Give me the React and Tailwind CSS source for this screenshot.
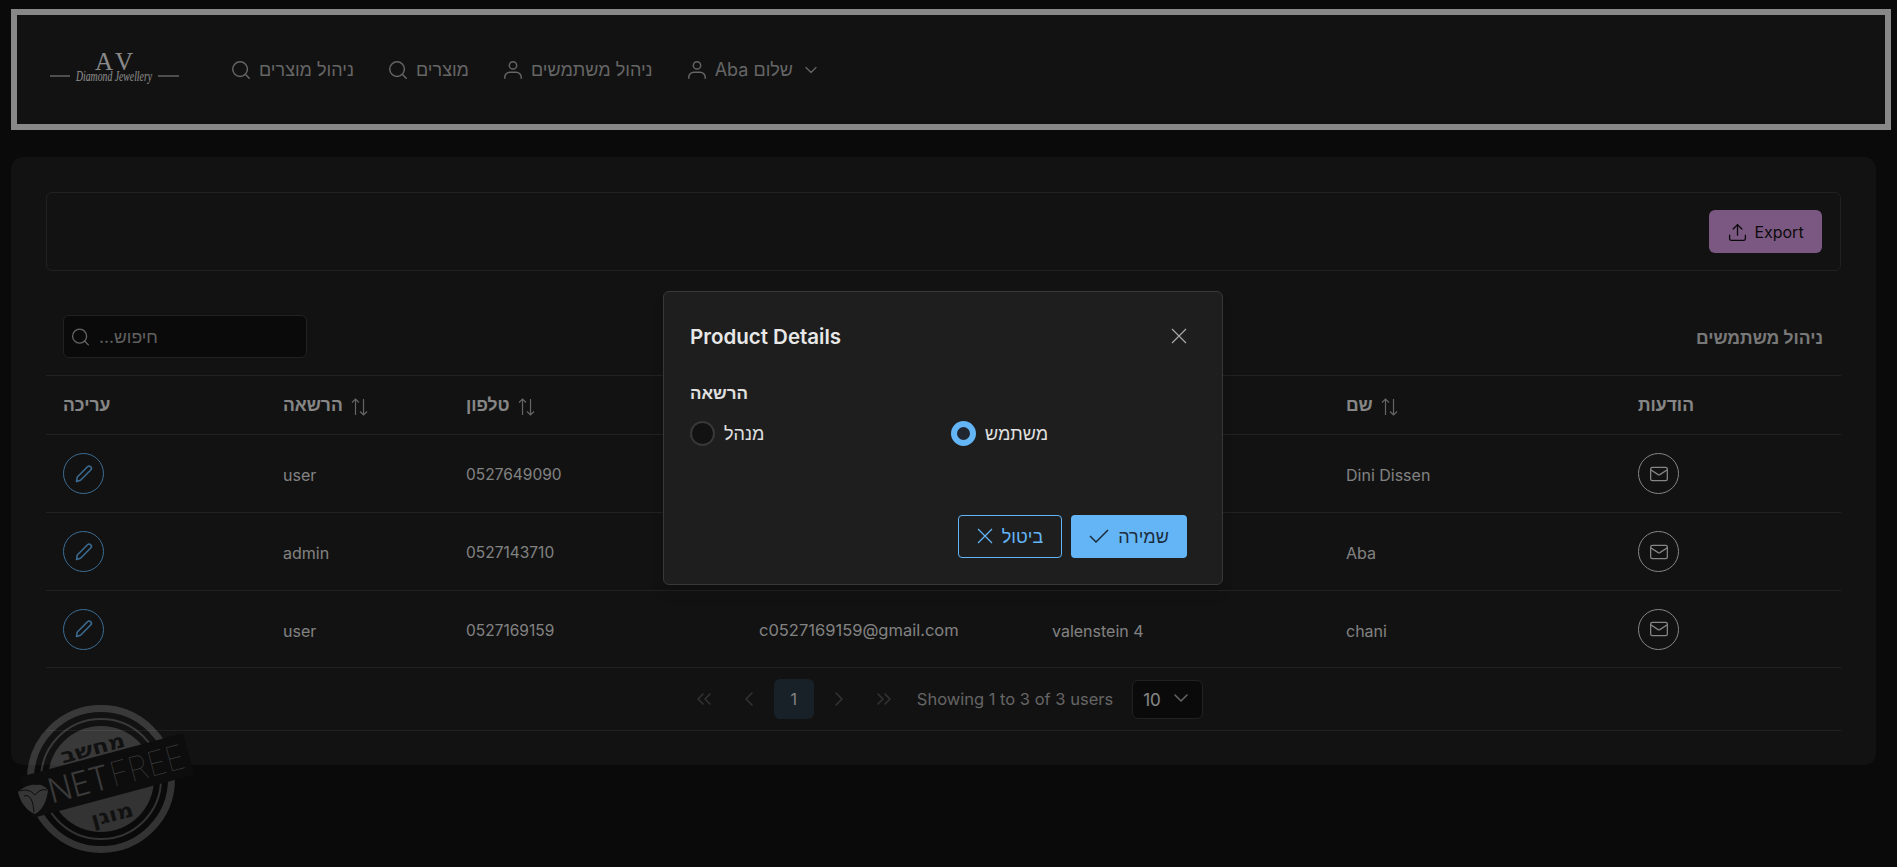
import { Search, ChevronDown, Mail, Upload, ChevronsLeft, ChevronLeft, ChevronRight, ChevronsRight } from "lucide-react";

const users = [
  { name: "Dini Dissen", address: "", email: "", phone: "0527649090", role: "user", rowH: "h-[78px]" },
  { name: "Aba", address: "", email: "", phone: "0527143710", role: "admin", rowH: "h-[78px]" },
  { name: "chani", address: "valenstein 4", email: "c0527169159@gmail.com", phone: "0527169159", role: "user", rowH: "h-[77px]" },
];

function SortIcon() {
  return (
    <svg width="17" height="18" viewBox="0 0 17 18" fill="none" stroke="currentColor" strokeWidth="1.2" className="mt-[4px] text-[#a8a8a8]">
      <path d="M4.5 17V1M1 4.5L4.5 1L8 4.5" />
      <path d="M12.5 1V17M9 13.5L12.5 17L16 13.5" />
    </svg>
  );
}

function PencilIcon() {
  return (
    <svg width="20" height="20" viewBox="0 0 20 20" fill="none" stroke="currentColor" strokeWidth="1.5" strokeLinejoin="round">
      <path d="M2.5 17.5L3.3 13L13.5 2.8C14.4 1.9 15.8 1.9 16.7 2.8C17.6 3.7 17.6 5.1 16.7 6L6.5 16.2L2.5 17.5Z" />
    </svg>
  );
}

function UserIcon() {
  return (
    <svg width="22" height="22" viewBox="0 0 24 24" fill="none" stroke="currentColor" strokeWidth="1.6">
      <circle cx="12" cy="7" r="4" />
      <path d="M3 21.5V20a5.5 5.5 0 0 1 5.5-5.5h7A5.5 5.5 0 0 1 21 20v1.5" />
    </svg>
  );
}

function CloseIcon({ size }) {
  return (
    <svg width={size} height={size} viewBox="0 0 16 16" fill="none" stroke="currentColor" strokeWidth="1.2">
      <path d="M1 1L15 15M15 1L1 15" />
    </svg>
  );
}

function Logo() {
  return (
    <svg width="129" height="44" viewBox="0 0 129 44" className="overflow-visible text-[#e6e6e6]">
      <text x="45" y="22" fill="currentColor" fontFamily="Liberation Serif, serif" fontSize="25">A</text>
      <text x="65" y="22" fill="currentColor" fontFamily="Liberation Serif, serif" fontSize="25">V</text>
      <text x="26" y="33" fill="currentColor" fontFamily="Liberation Serif, serif" fontStyle="italic" fontSize="15" textLength="76" lengthAdjust="spacingAndGlyphs">Diamond Jewellery</text>
      <path d="M0 28H20M108 28H129" stroke="currentColor" strokeWidth="1" />
    </svg>
  );
}

function NavItem({ icon, children }) {
  return (
    <div className="flex items-center gap-[7px] text-[#a8a8a8]">
      {icon}
      <span className="text-[18px]">{children}</span>
    </div>
  );
}

function HeadCell({ children, sort }) {
  return (
    <th className="px-[17px] text-left text-[17.5px] font-bold text-[#e0e0e0]">
      <div className="flex items-center gap-[8px]">
        <span>{children}</span>
        {sort && <SortIcon />}
      </div>
    </th>
  );
}

function Stamp() {
  return (
    <svg width="190" height="160" viewBox="0 0 190 160" className="absolute left-[10px] top-[700px] z-20">
      <g fill="none" stroke="#ffffff" strokeOpacity="0.17">
        <circle cx="91" cy="79" r="70.5" strokeWidth="7" />
        <circle cx="91" cy="79" r="60" strokeWidth="2" />
      </g>
      <circle cx="91" cy="79" r="53" fill="#ffffff" fillOpacity="0.17" />
      <g transform="rotate(-15 91 79)">
        <rect x="14" y="56" width="168" height="43" fill="#0d0d0d" />
        <text x="58" y="54" textLength="66" lengthAdjust="spacingAndGlyphs" fontFamily="DejaVu Sans, sans-serif" fontWeight="700" fontSize="20" fill="#111111">מחשב</text>
        <text x="71" y="123" textLength="43" lengthAdjust="spacingAndGlyphs" fontFamily="DejaVu Sans, sans-serif" fontWeight="700" fontSize="20" fill="#111111">מוגן</text>
        <text x="37" y="90" textLength="62" lengthAdjust="spacingAndGlyphs" fontFamily="Inter, sans-serif" fontWeight="300" fontSize="34" fill="#3a3a3a">NET</text>
        <text x="101" y="90" textLength="76" lengthAdjust="spacingAndGlyphs" fontFamily="Inter, sans-serif" fontWeight="100" fontSize="34" fill="#3a3a3a">FREE</text>
      </g>
      <path d="M8 92C14 86 22 84 26 85C31 84 35 86 38 90C37 100 33 110 25 114C16 111 10 101 8 92Z" fill="#363636" />
      <path d="M10 91C16 89 20 90 25 95C29 90 33 89 37 90M14 96C20 94 23 100 24 112" fill="none" stroke="#0d0d0d" strokeWidth="1" />
    </svg>
  );
}

export default function App() {
  return (
    <div className="relative h-[867px] overflow-hidden bg-[#121212] font-['Inter','Liberation_Sans',sans-serif] text-[16px] text-[#e0e0e0]">
      <header className="ml-[11px] mr-[6px] mt-[9px] flex h-[121px] items-center gap-[51px] border-[6px] border-[#e3e3e3] bg-[#1e1e1e] pl-[33px]">
        <Logo />
        <nav className="flex items-center gap-[33px]">
          <NavItem icon={<Search size={22} strokeWidth={1.6} />}>ניהול מוצרים</NavItem>
          <NavItem icon={<Search size={22} strokeWidth={1.6} />}>מוצרים</NavItem>
          <NavItem icon={<UserIcon />}>ניהול משתמשים</NavItem>
          <div className="flex items-center gap-[8px] text-[#a8a8a8]">
            <NavItem icon={<UserIcon />}>Aba שלום</NavItem>
            <ChevronDown size={20} strokeWidth={1.5} />
          </div>
        </nav>
      </header>

      <main className="ml-[11px] mr-[21px] mt-[27px] h-[608px] rounded-[12px] bg-[#1e1e1e] p-[35px]">
        <div className="flex h-[79px] justify-end rounded-[6px] border border-[#383838] py-[17px] pr-[18px]">
          <button className="flex h-[43px] w-[113px] items-center justify-center gap-[6px] rounded-[6px] bg-[#ce93d8] pt-[1px] text-[#121212]">
            <Upload size={21} strokeWidth={1.5} />
            Export
          </button>
        </div>

        <div className="flex items-center justify-between pb-[17px] pl-[17px] pr-[18px] pt-[44px]">
          <div className="flex h-[43px] w-[244px] items-center gap-[8px] rounded-[6px] border border-[#383838] bg-[#121212] px-[6px] text-[#a8a8a8]">
            <Search size={24} strokeWidth={1.5} />
            <input className="w-full bg-transparent pt-[2px] text-[17.5px] outline-none placeholder:text-[#a0a0a0]" placeholder="...חיפוש" />
          </div>
          <h2 className="pt-[3px] text-[17.5px] font-bold text-[#c8c8c8]">ניהול משתמשים</h2>
        </div>

        <table className="w-full table-fixed border-collapse">
          <colgroup>
            <col className="w-[220px]" />
            <col className="w-[183px]" />
            <col className="w-[293px]" />
            <col className="w-[293px]" />
            <col className="w-[294px]" />
            <col className="w-[292px]" />
            <col className="w-[220px]" />
          </colgroup>
          <thead>
            <tr className="h-[59px] border-y border-[#383838]">
              <HeadCell>עריכה</HeadCell>
              <HeadCell sort>הרשאה</HeadCell>
              <HeadCell sort>טלפון</HeadCell>
              <HeadCell sort>מייל</HeadCell>
              <HeadCell sort>כתובת</HeadCell>
              <HeadCell sort>שם</HeadCell>
              <HeadCell>הודעות</HeadCell>
            </tr>
          </thead>
          <tbody>
            {users.map((u) => (
              <tr key={u.phone} className={`${u.rowH} border-b border-[#383838] text-[#d8d8d8]`}>
                <td className="px-[17px]">
                  <button className="flex h-[41px] w-[41px] items-center justify-center rounded-full border border-[#64b5f6] text-[#64b5f6]">
                    <PencilIcon />
                  </button>
                </td>
                <td className="px-[17px] pt-[3px]">{u.role}</td>
                <td className="px-[17px] pt-[3px] text-[15.5px]">{u.phone}</td>
                <td className="px-[17px] pt-[3px] text-[16.5px]">{u.email}</td>
                <td className="px-[17px] pt-[3px]">{u.address}</td>
                <td className="px-[17px] pt-[3px]">{u.name}</td>
                <td className="px-[17px]">
                  <button className="flex h-[41px] w-[41px] items-center justify-center rounded-full border border-[#e0e0e0] text-[#e0e0e0]">
                    <Mail size={20} strokeWidth={1.5} />
                  </button>
                </td>
              </tr>
            ))}
          </tbody>
        </table>

        <div className="flex h-[63px] items-center justify-center border-b border-[#383838] text-[#a8a8a8]">
          <div className="flex items-center gap-[5px] text-[#555555]">
            <span className="flex h-[40px] w-[40px] items-center justify-center"><ChevronsLeft size={24} strokeWidth={1.5} /></span>
            <span className="flex h-[40px] w-[40px] items-center justify-center"><ChevronLeft size={24} strokeWidth={1.5} /></span>
            <span className="flex h-[40px] w-[40px] items-center justify-center rounded-[6px] bg-[#293741] text-[#d8d8d8]">1</span>
            <span className="flex h-[40px] w-[40px] items-center justify-center"><ChevronRight size={24} strokeWidth={1.5} /></span>
            <span className="flex h-[40px] w-[40px] items-center justify-center"><ChevronsRight size={24} strokeWidth={1.5} /></span>
          </div>
          <span className="ml-[13px] mr-[19px] text-[16.5px]">Showing 1 to 3 of 3 users</span>
          <div className="flex h-[39px] w-[71px] items-center justify-between rounded-[6px] border border-[#383838] bg-[#121212] pl-[10px] pr-[9px] text-[17px] text-[#e0e0e0]">
            <span className="pt-[3px]">10</span>
            <ChevronDown size={24} strokeWidth={1.5} className="mb-[3px] text-[#a8a8a8]" />
          </div>
        </div>
      </main>

      <div className="absolute inset-0 z-10 flex items-center justify-center bg-black/40 pr-[11px] pt-[8px]">
        <div className="h-[294px] w-[560px] rounded-[6px] border border-[#383838] bg-[#1e1e1e] shadow-lg">
          <div className="flex items-center justify-between px-[26px] py-[28px] pr-[27px]">
            <h3 className="pt-[1px] text-[20.5px] font-semibold leading-[32px] text-[#e8e8e8]">Product Details</h3>
            <span className="flex h-[32px] w-[32px] items-center justify-center text-[#a8a8a8]"><CloseIcon size={16} /></span>
          </div>
          <div className="px-[26px]">
            <div className="text-[17px] font-bold leading-[24px] text-[#e0e0e0]">הרשאה</div>
            <div className="mt-[16px] flex h-[25px] items-center text-[18px]">
              <label className="flex w-[261px] items-center gap-[9px]">
                <span className="h-[25px] w-[25px] rounded-full border-2 border-[#383838] bg-[#121212]" />
                <span className="text-[#e0e0e0]">מנהל</span>
              </label>
              <label className="flex items-center gap-[9px]">
                <span className="h-[25px] w-[25px] rounded-full border-[6px] border-[#64b5f6] bg-[#1f2630]" />
                <span className="text-[#e0e0e0]">משתמש</span>
              </label>
            </div>
          </div>
          <div className="mt-[69px] flex justify-end gap-[9px] pr-[35px] text-[18px]">
            <button className="flex h-[43px] w-[104px] items-center justify-center gap-[9px] rounded-[4px] border border-[#64b5f6] text-[#64b5f6]">
              <CloseIcon size={16} />
              ביטול
            </button>
            <button className="flex h-[43px] w-[116px] items-center justify-center gap-[9px] rounded-[4px] bg-[#64b5f6] text-[#1c2c3c]">
              <svg width="20" height="14" viewBox="0 0 20 14" fill="none" stroke="currentColor" strokeWidth="1.5">
                <path d="M1 7L7 13L19 1" />
              </svg>
              שמירה
            </button>
          </div>
        </div>
      </div>

      <Stamp />
    </div>
  );
}
